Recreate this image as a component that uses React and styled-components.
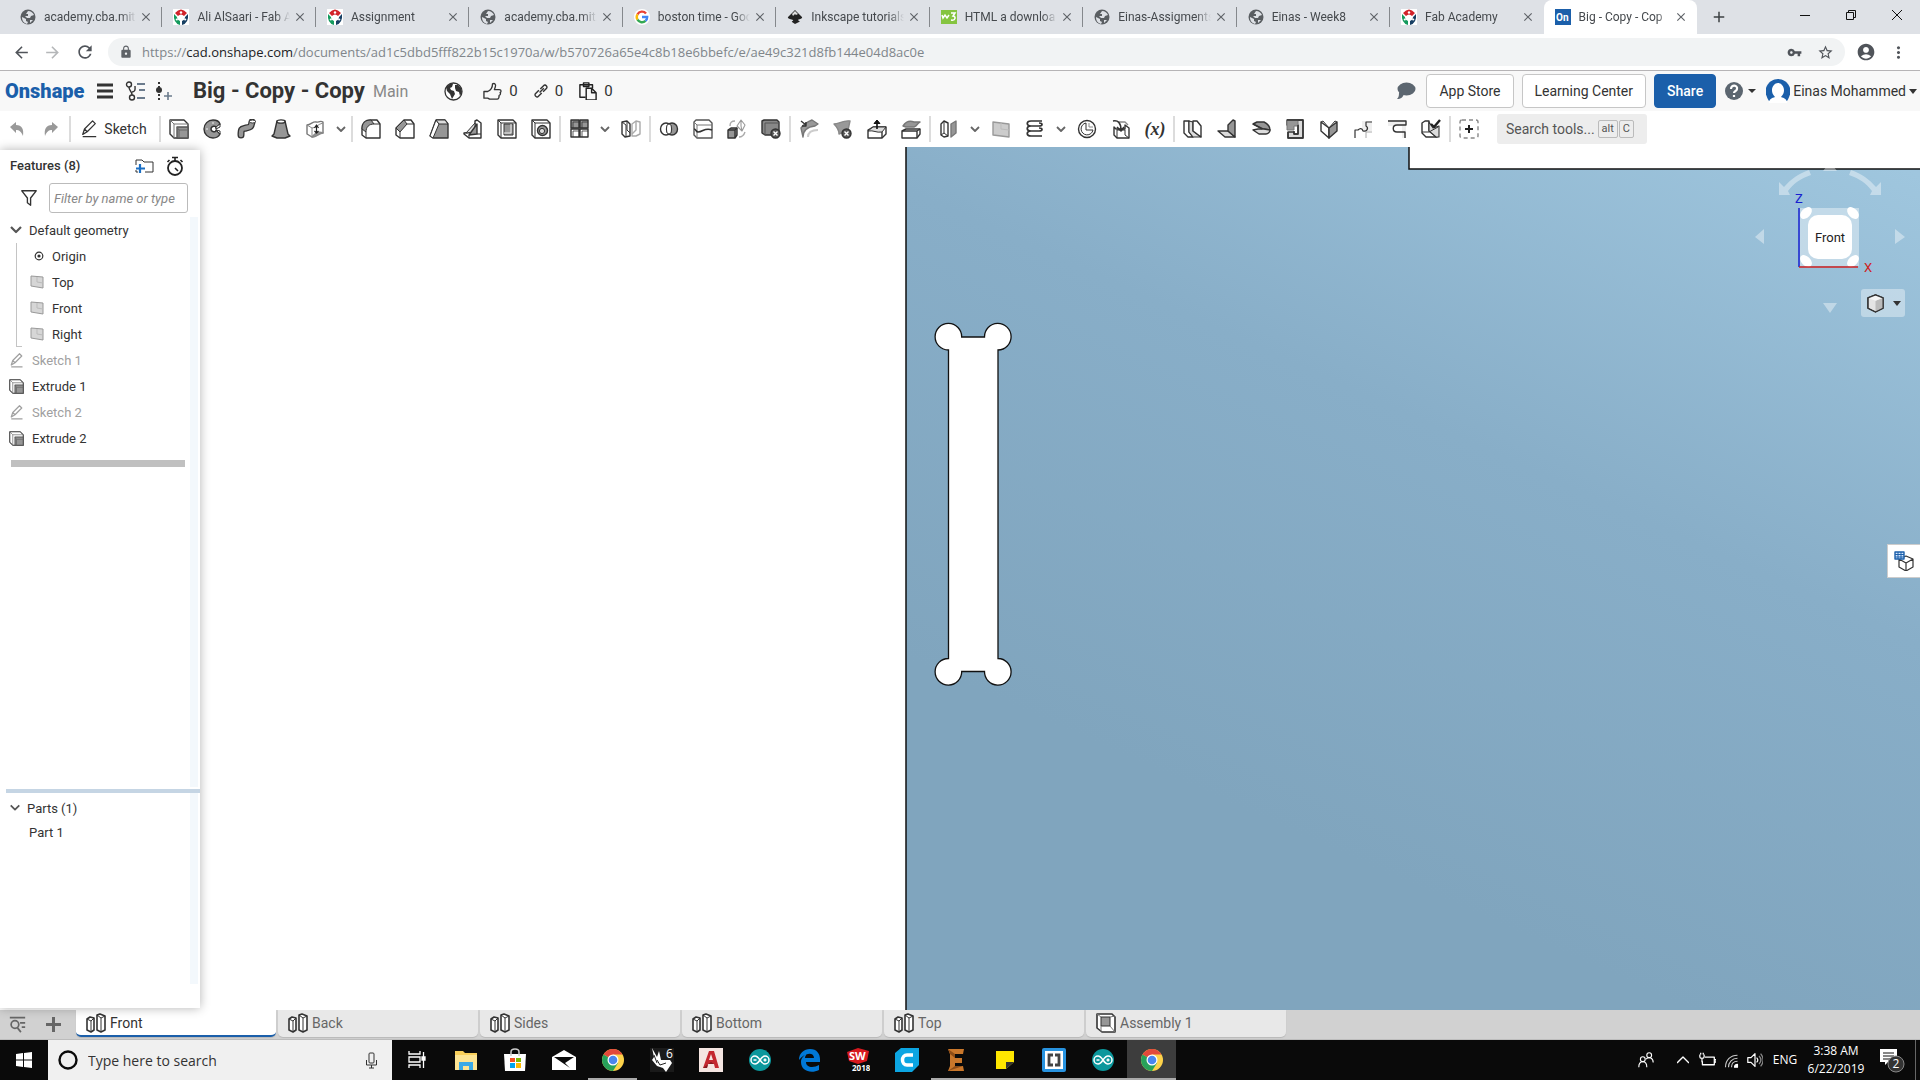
import React from "react";
import styled, { createGlobalStyle, css } from "styled-components";
import {
  MdVpnKey,
  MdStarBorder,
  MdAccountCircle,
  MdMoreVert,
  MdArrowBack,
  MdArrowForward,
  MdRefresh,
  MdLock,
  MdClose,
  MdAdd,
} from "react-icons/md";

const GlobalStyle = createGlobalStyle`
  * {
    box-sizing: border-box;
  }

  body {
    margin: 0;
    font-family: Roboto, "Liberation Sans", sans-serif;
    color: #333333;
  }

  button {
    font-family: inherit;
    color: inherit;
    background: none;
    border: 0;
    padding: 0;
  }
`;

const Page = styled.div`
  display: flex;
  flex-direction: column;
  min-height: 100vh;
  background: #ffffff;
`;

/* ---------- browser ---------- */

const TabStrip = styled.div`
  display: flex;
  height: 34px;
  padding-left: 9px;
  background: #dee1e6;
`;

const BrowserTabs = styled.div`
  display: flex;
  flex: 0 1 1688px;
  min-width: 0;
`;

const BrowserTab = styled.div`
  display: flex;
  flex: 1;
  align-items: center;
  min-width: 0;
  padding: 0 9px 0 11px;
  font-size: 12px;
  color: #45494d;
  background: linear-gradient(#85888c, #85888c) right center / 1px 20px no-repeat;

  ${(p) =>
    p.$plain &&
    css`
      background: none;
    `}

  ${(p) =>
    p.$active &&
    css`
      background: #ffffff;
      border-radius: 8px 8px 0 0;
    `}

  svg {
    flex: none;
  }
`;

const TabTitle = styled.span`
  flex: 1;
  margin: 0 3px 0 8px;
  overflow: hidden;
  white-space: nowrap;
  mask-image: linear-gradient(90deg, #000 84%, transparent);
`;

const TabClose = styled.button`
  display: flex;
  color: #5f6368;
`;

const NewTab = styled.button`
  display: grid;
  place-items: center;
  width: 44px;
  color: #3c4043;
`;

const WindowButtons = styled.div`
  display: flex;
  margin-left: auto;
`;

const WindowButton = styled.button`
  display: grid;
  place-items: center;
  width: 46px;
  height: 29px;
`;

const AddressBar = styled.div`
  display: flex;
  align-items: center;
  height: 37px;
  padding: 0 11px;
  border-bottom: 1px solid #b6b4b6;
  color: #5f6368;
`;

const NavButton = styled.button`
  display: grid;
  place-items: center;
  width: ${(p) => p.$width || 32}px;
  height: 28px;
  color: ${(p) => (p.$dim ? "#b5b7b9" : "#50545a")};
`;

const Omnibox = styled.div`
  display: flex;
  flex: 1;
  align-items: center;
  height: 28px;
  margin-left: 11px;
  padding: 0 8px 0 11px;
  border-radius: 14px;
  background: #f1f3f4;
`;

const Url = styled.div`
  flex: 1;
  margin-left: 9px;
  font-family: "Open Sans", sans-serif;
  font-size: 13px;
  color: #80868b;

  b {
    font-weight: 400;
    color: #202124;
  }
`;

/* ---------- document header ---------- */

const Header = styled.header`
  display: flex;
  align-items: center;
  height: 40px;
  padding: 0 3px 0 5px;
  background: #f8f8f8;
`;

const Brand = styled.div`
  width: 82px;
  font-size: 20px;
  font-weight: 900;
  line-height: 28px;
  color: #1b5faa;
`;

const HeaderIcon = styled.button`
  display: grid;
  place-items: center;
  width: ${(p) => p.$width || 24}px;
  height: 32px;
`;

const DocTitle = styled.h1`
  margin: 0 8px 0 14px;
  font-size: 22px;
  font-weight: 700;
  line-height: 32px;
`;

const Workspace = styled.span`
  margin-right: 36px;
  font-size: 16px;
  color: #888888;
`;

const Stats = styled.div`
  display: flex;
  align-items: center;
  gap: 16px;
  margin-left: 20px;
`;

const Stat = styled.button`
  display: flex;
  align-items: center;
  gap: 7px;
  font-size: 15px;
`;

const HeaderRight = styled.div`
  display: flex;
  align-items: center;
  gap: 8px;
  margin-left: auto;
`;

const HeaderButton = styled.button`
  height: 34px;
  padding: 0 12px;
  border: 1px solid ${(p) => (p.$primary ? "#1b5faa" : "#c6c6c6")};
  border-radius: 4px;
  background: ${(p) => (p.$primary ? "#1b5faa" : "#ffffff")};
  color: ${(p) => (p.$primary ? "#ffffff" : "#333333")};
  font-size: 14px;
  font-weight: ${(p) => (p.$primary ? 500 : 400)};
`;

const UserMenu = styled.button`
  display: flex;
  align-items: center;
  gap: 3px;
  font-size: 14px;
`;

/* ---------- toolbar ---------- */

const Toolbar = styled.div`
  display: flex;
  align-items: center;
  height: 36px;
`;

const ToolButton = styled.button`
  display: grid;
  flex: none;
  place-items: center;
  width: ${(p) => (p.$narrow ? 18 : 34)}px;
  height: 30px;
`;

const SketchButton = styled.button`
  display: flex;
  align-items: center;
  justify-content: center;
  gap: 6px;
  width: 86px;
  padding-right: 3px;
  font-size: 14px;
`;

const Divider = styled.span`
  flex: none;
  width: 2px;
  height: 26px;
  margin: 0 1px;
  background: #dcdcdc;
`;

const SearchTools = styled.button`
  display: flex;
  align-items: center;
  width: 150px;
  height: 30px;
  margin-left: 11px;
  padding: 0 9px;
  border-radius: 3px;
  background: #ededed;
  font-size: 14px;
  color: #555555;
`;

const Key = styled.kbd`
  height: 18px;
  margin-left: 1px;
  padding: 0 3px;
  border: 1px solid #bbbbbb;
  border-radius: 2px;
  font-family: inherit;
  font-size: 11px;
  line-height: 16px;

  &:first-of-type {
    margin-left: 3px;
  }
`;

/* ---------- modelling area ---------- */

const Stage = styled.main`
  position: relative;
  display: flex;
  flex: 1;
  min-height: 600px;
  padding: 3px 0 2px;
`;

const Scene = styled.svg`
  position: absolute;
  inset: 0;
  width: 100%;
  height: 100%;
`;

const ViewCube = styled.svg`
  position: absolute;
  top: 14px;
  right: 10px;
`;

const ViewMenu = styled.button`
  position: absolute;
  top: 142px;
  right: 15px;
  display: flex;
  align-items: center;
  justify-content: center;
  gap: 8px;
  width: 44px;
  height: 28px;
  border-radius: 3px;
  background: rgba(255, 255, 255, 0.38);
`;

const SideTab = styled.button`
  position: absolute;
  top: 397px;
  right: 0;
  display: grid;
  place-items: center;
  width: 33px;
  height: 34px;
  border: 1px solid #cccccc;
  border-right: 0;
  background: #ffffff;
`;

const Panel = styled.aside`
  position: relative;
  display: flex;
  flex-direction: column;
  width: 200px;
  background: #ffffff;
  box-shadow: 0 0 10px rgba(0, 0, 0, 0.3);
  font-size: 13px;
`;

const PanelHeader = styled.div`
  display: flex;
  align-items: center;
  gap: 12px;
  height: 32px;
  padding: 0 16px 0 10px;
`;

const PanelTitle = styled.h2`
  flex: 1;
  margin: 0;
  font-size: 13px;
  font-weight: 500;
  line-height: 18px;
`;

const FilterRow = styled.label`
  display: flex;
  align-items: center;
  gap: 12px;
  padding: 1px 12px 4px 21px;
`;

const FilterInput = styled.input`
  flex: 1;
  min-width: 0;
  height: 30px;
  padding: 0 4px;
  border: 1px solid #bbbbbb;
  border-radius: 3px;
  font-family: inherit;
  font-size: 13px;
  font-style: italic;

  &::placeholder {
    color: #888888;
  }
`;

const PanelSection = styled.section`
  flex: ${(p) => (p.$grow ? "1" : "0 0 191px")};
  margin-right: 2px;
  margin-bottom: ${(p) => (p.$grow ? 2 : 24)}px;
  padding-top: ${(p) => (p.$grow ? 0 : 2)}px;
  border-right: 8px solid #f3f8fc;
`;

const Splitter = styled.div`
  height: 4px;
  margin-left: 6px;
  background: #c5d5e4;
`;

const TreeRow = styled.div`
  display: flex;
  align-items: center;
  gap: ${(p) => (p.$heading ? 6 : 8)}px;
  height: ${(p) => (p.$short ? 22 : 26)}px;
  padding-left: ${(p) => p.$indent || 9}px;
  color: ${(p) => (p.$muted ? "#a0a0a0" : "#333333")};
`;

const TreeGroup = styled.div`
  margin-left: 16px;
  border-left: 1px solid #c4c4c4;
  background: linear-gradient(#c4c4c4, #c4c4c4) left bottom / 5px 1px no-repeat;
`;

const RollbackBar = styled.div`
  height: 7px;
  margin: 9px 5px 0 11px;
  background: #c0c0c0;
`;

/* ---------- document tabs ---------- */

const DocTabs = styled.nav`
  display: flex;
  gap: 2px;
  height: 30px;
  border-bottom: 1px solid #bcbcbc;
  background: #d1d1d1;
`;

const DocTabTools = styled.div`
  display: flex;
  align-items: center;
  justify-content: space-between;
  width: 74px;
  padding: 0 13px 0 9px;
`;

const DocTab = styled.button`
  display: flex;
  flex: 0 1 200px;
  align-items: center;
  gap: 4px;
  height: 27px;
  padding: 0 10px;
  border-bottom: 2px solid ${(p) => (p.$active ? "#1b5faa" : "#e8e8e8")};
  border-radius: 0 0 5px 5px;
  background: ${(p) => (p.$active ? "#ffffff" : "#e8e8e8")};
  box-shadow: 0 1px 1px #b8b8b8;
  color: ${(p) => (p.$active ? "#333333" : "#666666")};
  font-size: 14px;
`;

/* ---------- Windows taskbar ---------- */

const Taskbar = styled.footer`
  display: flex;
  height: 40px;
  background: #0a0a0a;
  color: #ffffff;
  font-family: "Open Sans", sans-serif;
`;

const TaskButton = styled.button`
  display: grid;
  place-items: center;
  width: ${(p) => p.$width || 49}px;
  background: ${(p) => (p.$active ? "#3d3d3d" : "none")};
  box-shadow: ${(p) => (p.$open ? "inset 0 -2px #aaaaaa" : "none")};
`;

const WindowsSearch = styled.div`
  display: flex;
  flex: 0 1 344px;
  align-items: center;
  gap: 10px;
  padding: 0 14px 0 10px;
  background: #f0f0f0;
  color: #333333;

  input {
    flex: 1;
    min-width: 0;
    padding: 0;
    border: 0;
    background: none;
    font-family: "Open Sans", sans-serif;
    font-size: 14px;
  }

  input::placeholder {
    color: #333333;
  }
`;

const Tray = styled.div`
  display: flex;
  align-items: center;
  margin-left: auto;
  padding-right: 4px;
`;

const TrayButton = styled.button`
  display: grid;
  place-items: center;
  width: ${(p) => p.$width || 24}px;
  height: 40px;
  font-size: 12px;
  line-height: 18px;
`;

const TrayEdge = styled.span`
  width: 1px;
  height: 40px;
  background: #666666;
`;

/* ---------- drawings ---------- */

const Icon = ({ size = 20, box = 20, children, ...rest }) => (
  <svg
    width={size}
    height={size}
    viewBox={`0 0 ${box} ${box}`}
    fill="none"
    stroke="#333"
    strokeWidth="1.4"
    strokeLinejoin="round"
    aria-hidden="true"
    {...rest}
  >
    {children}
  </svg>
);

const G = "#969696";
const L = "#dcdcdc";

const Caret = () => (
  <Icon size={10} box={10} strokeWidth="1.8" stroke="#666">
    <path d="M1 3l4 4 4-4" />
  </Icon>
);

const DownTriangle = () => (
  <svg width="8" height="5" viewBox="0 0 8 5" aria-hidden="true">
    <path d="M0 0h8L4 5z" fill="#333" />
  </svg>
);

const tools = {
  undo: <path d="M3 8l6-5v3c6 0 8 4 7 11-2-5-4-6-7-6v3z" fill="#999" stroke="none" />,
  redo: <path d="M17 8l-6-5v3C5 6 3 10 4 17c2-5 4-6 7-6v3z" fill="#999" stroke="none" />,
  sketch: <path d="M3 16l2-6 9-9 3 3-9 9-5 3zM5 10l3 3M3 18.500h15" />,
  extrude: (
    <>
      <path d="M1 1h14l4 4v14H5l-4-4z" fill="#fff" />
      <path d="M1 1l4 4v14M5 5h14" stroke="#777" strokeWidth="1" />
      <path d="M8 8h11v11H8z" fill={G} stroke="#555" />
      <path d="M8 8l2 3h9M10 11v8" stroke="#666" strokeWidth="1" />
    </>
  ),
  revolve: (
    <>
      <path
        d="M10 1C5 1 1 5 1 10s4 9 9 9c3 0 6-2 7-4l-4-4c0 3-5 2-5-1s5-4 5-1l4-4c-1-3-4-4-7-4z"
        fill={G}
      />
      <path d="M17 5v3l-4 2V8zM13 11l4 1v3z" fill="#fff" strokeWidth="1" />
      <path d="M3 10h2M10 3v2" stroke="#eee" strokeWidth="1" />
    </>
  ),
  sweep: (
    <>
      <path
        d="M4 16c0-7 1-6 5-7 5-1 5-1 6-6"
        stroke="#333"
        strokeWidth="7"
        strokeLinecap="round"
      />
      <path
        d="M4 16c0-7 1-6 5-7 5-1 5-1 6-6"
        stroke={G}
        strokeWidth="4.400"
        strokeLinecap="round"
      />
      <ellipse cx="15.500" cy="2.500" rx="3" ry="1.500" fill="#fff" strokeWidth="1" />
    </>
  ),
  loft: (
    <>
      <path d="M6 2l-3 13-2 2 5 2h8l5-2-2-2-3-13z" fill={G} />
      <ellipse cx="10" cy="2.500" rx="4" ry="1.600" fill="#fff" />
    </>
  ),
  thicken: (
    <>
      <path d="M2 6c4 0 6-4 9-3 2 1 4-2 7 0v11c-4-1-6 4-11 4l-5-3z" fill="#fff" stroke="#777" />
      <path d="M2 6l5 3v9M7 9c4 0 6-4 11-5" stroke="#888" strokeWidth="1" />
      <path d="M7 18c3-4 7-6 11-4-4 0-6 4-11 4z" fill={G} stroke="#888" />
      <path d="M11.500 14V7M9.500 9l2-3 2 3M9.500 12l2 2 2-2" stroke="#222" strokeWidth="1.200" />
    </>
  ),
  fillet: (
    <>
      <path d="M1 10c0-6 3-9 9-9h6l3 4v14H5l-4-3z" fill="#fff" />
      <path d="M1 10c0-6 3-9 9-9l3 4c-5 0-8 3-8 8z" fill={G} strokeWidth="1" />
      <path d="M5 13v6M13 5h6" strokeWidth="1" />
    </>
  ),
  chamfer: (
    <>
      <path d="M1 9l8-8h7l3 4v14H5l-4-3z" fill="#fff" />
      <path d="M1 9l8-8 3 4-7 8z" fill={G} strokeWidth="1" />
      <path d="M5 13v6M12 5h7" strokeWidth="1" />
    </>
  ),
  draft: (
    <>
      <path d="M1 17L7 1h9l3 4v14H4z" fill={G} />
      <path d="M7 1l3 4-6 14-3-2z" fill="#fff" strokeWidth="1" />
      <path d="M7 1h9l3 4h-9z" fill={L} strokeWidth="1" />
    </>
  ),
  rib: (
    <>
      <path d="M12 2l2-1 4 3v15H6l-5-4v-1l11-1z" fill="#fff" />
      <path d="M12 4v9l-9 1z" fill={L} strokeWidth="1" />
      <path d="M14 5v10l-8 1 8-11z" fill={G} />
      <path d="M14 15h4M6 16v3" strokeWidth="1" />
    </>
  ),
  shell: (
    <>
      <path d="M1 1h15l3 3v15H4l-3-3z" fill="#fff" />
      <path d="M1 1l3 3h15M4 4v15" strokeWidth="1" />
      <path d="M7 5h9v11H7z" fill={G} strokeWidth="1" />
      <path d="M7 14h7V5" stroke="#eee" strokeWidth="1" />
    </>
  ),
  hole: (
    <>
      <path d="M1 1h15l3 3v15H4l-3-3z" fill="#fff" />
      <path d="M1 1l3 3h15M4 4v15" strokeWidth="1" />
      <circle cx="11.500" cy="11.500" r="5" fill={G} />
      <circle cx="11" cy="12" r="2.600" fill={L} strokeWidth="1" />
    </>
  ),
  pattern: (
    <>
      <path d="M2 1h8v8H2zM11 1h8v8h-8z" fill={G} strokeWidth="1.400" />
      <path d="M2 10h8v8H2zM11 10h8v8h-8z" fill="#fff" strokeWidth="1.400" />
      <path d="M4 3h6M13 3h6M4 3v6M13 3v6M4 12h6M13 12h6M4 12v6M13 12v6" strokeWidth=".8" />
    </>
  ),
  mirror: (
    <>
      <path d="M1 3l5-1 3 3v12l-5 1-3-3z" fill="#fff" />
      <path d="M1 3l4 3v12M6 2v9l3 3" strokeWidth="1" />
      <path d="M19 3l-4-1-4 3v12h4l4-2z" stroke="#aaa" />
      <path d="M15 2v9l-4 4" stroke="#aaa" />
    </>
  ),
  boolean: (
    <>
      <ellipse cx="13" cy="10" rx="5.500" ry="6" fill={G} />
      <ellipse cx="7" cy="10" rx="5.500" ry="6" />
      <ellipse cx="10" cy="10" rx="2.500" ry="5" fill="#fff" strokeWidth="1" />
    </>
  ),
  split: (
    <>
      <path d="M1 3l2-2h13l3 3v15H4l-3-3z" fill="#fff" stroke="#555" />
      <path d="M1 3l3 3h15M4 6v13" stroke="#777" strokeWidth="1" />
      <path d="M1 10c2 0 2 3 4 3 5 0 7-5 14-2" strokeWidth="1.600" />
    </>
  ),
  transform: (
    <>
      <path d="M1 11l3-2h6v7l-2 3H1z" fill={G} />
      <path d="M1 11h7v8M8 11l2-2" />
      <path d="M14 1l4 5-3 6-5-5zM14 1v6l1 5" stroke="#999" strokeWidth="1.100" />
      <path d="M3 7c0-4 2-5 5-5M18 13c-1 3-3 5-6 5" stroke="#aaa" />
    </>
  ),
  deletePart: (
    <>
      <path d="M1 2l2-1h13l2 2v13H4l-3-2z" fill="#888" />
      <path d="M4 4h14M4 4v12" stroke="#555" strokeWidth="1" />
      <circle cx="14.500" cy="14.500" r="4.500" fill="#555" stroke="#333" />
      <path d="M12.500 12.500l4 4M16.500 12.500l-4 4" stroke="#fff" />
    </>
  ),
  modifyFillet: (
    <>
      <path d="M4 18c0-6 3-10 12-11l3-2-6-4C8 3 4 6 2 9z" fill="#999" stroke="#777" />
      <path d="M9 18c0-4 3-7 10-7" stroke="#ccc" strokeWidth="2" />
      <path d="M2 2l5 4M7 3v4H3" stroke="#333" />
    </>
  ),
  deleteFace: (
    <>
      <path d="M1 5c5 0 9-4 16-3l-2 9-9 4C6 11 4 8 1 5z" fill="#999" stroke="#888" />
      <circle cx="13.500" cy="14.500" r="4.500" fill="#555" stroke="#333" />
      <path d="M11.500 12.500l4 4M15.500 12.500l-4 4" stroke="#fff" />
    </>
  ),
  moveFace: (
    <>
      <path d="M1 11l5-3h13v7l-4 4H1z" fill="#fff" />
      <path d="M1 12c6-1 8 2 14 1l4-5H6z" fill={L} strokeWidth="1" />
      <path d="M15 13v6" />
      <path d="M10 10V3" stroke="#111" strokeWidth="1.600" />
      <path d="M7 4.500L10 1l3 3.500z" fill="#111" stroke="#111" strokeWidth="1" />
    </>
  ),
  replaceFace: (
    <>
      <path d="M1 12l4-2h14v5l-3 4H1z" fill="#fff" />
      <path d="M1 12h15l3-2M16 12v7" />
      <path d="M2 7c2-3 6-6 11-4h6c-3 1-2 4-6 5H5z" fill={G} stroke="#777" />
    </>
  ),
  surface: (
    <>
      <path d="M2 5l3-3 4 2v13l-4 1-3-2z" fill="#fff" />
      <path d="M5 2v12l-3 2M5 14l4 3" strokeWidth="1" />
      <path d="M12 5l5-3v12l-5 4z" fill={G} stroke="#777" />
    </>
  ),
  plane: (
    <>
      <path d="M2 3l16 2v13l-16-2z" fill="#ccc" stroke="#999" />
      <path d="M10 4v6l8 1" stroke="#bbb" strokeWidth="1" />
    </>
  ),
  helix: (
    <path
      d="M17 2H6C1 2 1 7 6 7h8c4 0 4-3 0-3M6 7c-5 0-5 5 0 5h8c4 0 4-3 0-3M6 12c-5 0-5 5 0 5h11"
      strokeWidth="1.700"
    />
  ),
  curve: (
    <>
      <circle cx="10" cy="10" r="8.500" />
      <path d="M9 4a6 6 0 1 0 7 7H9z" strokeWidth="1" />
      <path d="M12 4v4h4" stroke="#888" strokeWidth="1" />
    </>
  ),
  derived: (
    <>
      <path d="M3 8l2 2h9V6l4 3v10H6l-3-3z" fill="#fff" />
      <path d="M6 19V11h8v5l4 3" strokeWidth="1" />
      <path d="M7 3h7l3 3" stroke="#888" />
      <path d="M2 2c5-1 8 2 8 9M6 8l4 4 3-4" strokeWidth="1.600" />
    </>
  ),
  sheetMetal: (
    <>
      <path d="M1 2h5v11l4 5H5l-4-4z" fill="#fff" />
      <path d="M6 2l4 1v9l8 6h-8l-4-5z" fill={L} strokeWidth="1.100" />
      <path d="M10 2h4l4 5v11l-8-6z" fill="#fff" />
    </>
  ),
  flange: (
    <>
      <path d="M1 12h10l7 6H8z" fill={L} />
      <path d="M11 12V6l5-5 2 1v16z" fill={G} />
    </>
  ),
  hem: (
    <>
      <path d="M2 5l4-2h7c4 2 6 5 6 8l-7-1z" fill={G} />
      <path d="M2 11l5-1h6l6 1c0 2-2 4-4 4H8z" fill={L} />
      <path d="M2 5l9 5" />
    </>
  ),
  tab: (
    <>
      <path d="M2 1h16v18H3v-6h6v2h4V6H2z" fill={L} />
      <path d="M2 1h11v6H9v4H2z" fill={G} stroke="#777" strokeWidth="1" />
      <path d="M13 6v9H9v-3M3 13v6h15V1H2" />
    </>
  ),
  joint: (
    <>
      <path d="M2 3l8 6v10l-8-7z" fill="#fff" />
      <path d="M10 9l8-6v9l-8 7z" fill={G} />
      <path d="M2 3l2-1 6 7 6-7 2 1" strokeWidth="1" />
    </>
  ),
  corner: (
    <>
      <path d="M9 2h10v10H9z" fill="#eee" stroke="none" />
      <path d="M19 3h-6v4c3 2 1 6-3 5-1-3-3-3-5-1H2v8" strokeWidth="1.200" />
      <path d="M13 13v6M13 13h6" stroke="#aaa" strokeWidth="1" />
    </>
  ),
  relief: (
    <>
      <path d="M1 1h18v18h-4V7H1z" fill="#eee" stroke="none" />
      <path d="M1 2h18v4h-9c-5 0-5 7 0 7h8v6" />
    </>
  ),
  finish: (
    <>
      <path d="M1 4l3-2h4v10l8 6H5l-4-4z" fill="#fff" />
      <path d="M8 3l4 6 6-2v11h-3l-7-6z" fill={L} strokeWidth="1.100" />
      <path d="M1 13h7l9-5" strokeWidth="1" />
      <path d="M10 5l3 3 6-7" stroke="#222" strokeWidth="2.400" />
    </>
  ),
  addTool: (
    <>
      <rect x="1" y="1" width="18" height="18" rx="2" stroke="#888" strokeDasharray="4 3" />
      <path d="M10 6v8M6 10h8" stroke="#222" strokeWidth="2" />
    </>
  ),
};

const Tool = ({ name, label }) => (
  <ToolButton aria-label={label || name}>
    <Icon>{tools[name]}</Icon>
  </ToolButton>
);

const MoreTools = () => (
  <ToolButton $narrow aria-label="more">
    <Caret />
  </ToolButton>
);

const VariableTool = styled(ToolButton)`
  font-family: "Liberation Serif", serif;
  font-size: 18px;
  font-style: italic;
  font-weight: 700;
`;

const GlobeFav = () => (
  <svg width="16" height="16" viewBox="0 0 16 16" aria-hidden="true">
    <circle cx="8" cy="8" r="7.500" fill="#5a5e62" />
    <path
      d="M8 2c3 0 5 2 6 4l-3 1-1 2H7L5 7h3V5H6zM2 8l4 2v2l2 1-1 2C4 14 2 12 2 8zM10 11l3 0-3 3z"
      fill="#dee1e6"
    />
  </svg>
);

const FabFav = () => (
  <svg width="16" height="16" viewBox="0 0 16 16" aria-hidden="true">
    <rect width="16" height="16" fill="#fff" />
    <path d="M2 4q6-7 12 0l-3 3q-3-3-6 0z" fill="#d2232a" />
    <path d="M1 5l3 3c0 2 1 3 3 4v4q-7-2-6-11z" fill="#149a5d" />
    <path d="M15 5l-3 3c0 2-1 3-3 4v4q7-2 6-11z" fill="#173f63" />
    <circle cx="8" cy="3.500" r="1.200" fill="#fff" />
    <circle cx="3.800" cy="10.500" r="1.100" fill="#fff" />
    <circle cx="12.200" cy="10.500" r="1.100" fill="#fff" />
  </svg>
);

const GoogleFav = () => (
  <svg width="16" height="16" viewBox="0 0 16 16" fill="none" strokeWidth="2.400" aria-hidden="true">
    <circle cx="8" cy="8" r="8" fill="#fff" />
    <path d="M12 4.500A5.200 5.200 0 0 0 3.500 5.300" stroke="#ea4335" />
    <path d="M3.500 5.300a5.200 5.200 0 0 0 0 5.400" stroke="#fbbc05" />
    <path d="M3.500 10.700a5.200 5.200 0 0 0 8 1.200" stroke="#34a853" />
    <path d="M11.500 11.900A5.200 5.200 0 0 0 13.200 8H8" stroke="#4285f4" />
  </svg>
);

const InkscapeFav = () => (
  <svg width="16" height="16" viewBox="0 0 16 16" aria-hidden="true">
    <path d="M8 1l7 7c1 2-4 2-4 3s3 1 1 2l-4 2-3-2c-1-1 2-1 1-2S0 10 1 8z" fill="#222" />
    <path d="M8 2l3 3-2 1-1-1-2 2-1-2z" fill="#ddd" />
  </svg>
);

const W3Fav = () => (
  <svg width="16" height="16" viewBox="0 0 16 16" aria-hidden="true">
    <rect width="16" height="14" y="1" fill="#85c440" />
    <path
      d="M1 6l1 3 2-3 2 3 2-3M10 4h4l-2 3c3 0 3 5-2 4"
      fill="none"
      stroke="#fff"
      strokeWidth="1.500"
    />
  </svg>
);

const OnshapeFav = () => (
  <svg width="16" height="16" viewBox="0 0 16 16" aria-hidden="true">
    <rect width="16" height="16" fill="#1b5faa" />
    <text x="1" y="12" fill="#fff" fontSize="10" fontWeight="700">
      On
    </text>
  </svg>
);

const Earth = () => (
  <svg width="19" height="19" viewBox="0 0 19 19" aria-hidden="true">
    <circle cx="9.500" cy="9.500" r="8.500" fill="#fff" stroke="#333" strokeWidth="1.300" />
    <path
      d="M2 5l4-3 3 0-1 3-2 1 1 2 3 1 1 3-3 5-2-5-3-3zM11 3l3 0 3 3 1 4-2 4-1-4-3-1-1-3z"
      fill="#333"
    />
  </svg>
);

const browserTabs = [
  { title: "academy.cba.mit.", Fav: GlobeFav },
  { title: "Ali AlSaari - Fab A", Fav: FabFav },
  { title: "Assignment", Fav: FabFav },
  { title: "academy.cba.mit.", Fav: GlobeFav },
  { title: "boston time - Goo", Fav: GoogleFav },
  { title: "Inkscape tutorials", Fav: InkscapeFav },
  { title: "HTML a downloa", Fav: W3Fav },
  { title: "Einas-Assigments", Fav: GlobeFav },
  { title: "Einas - Week8", Fav: GlobeFav },
  { title: "Fab Academy", Fav: FabFav, plain: true },
  { title: "Big - Copy - Cop", Fav: OnshapeFav, active: true },
];

const Browser = () => (
  <>
    <TabStrip>
      <BrowserTabs>
        {browserTabs.map(({ title, Fav, active, plain }, i) => (
          <BrowserTab key={i} $active={active} $plain={plain}>
            <Fav />
            <TabTitle>{title}</TabTitle>
            <TabClose aria-label="Close tab">
              <MdClose size={14} />
            </TabClose>
          </BrowserTab>
        ))}
      </BrowserTabs>
      <NewTab aria-label="New tab">
        <MdAdd size={18} />
      </NewTab>
      <WindowButtons>
        <WindowButton aria-label="Minimise">
          <Icon size={10} box={10} stroke="#111" strokeWidth="1">
            <path d="M0 5.500h10" />
          </Icon>
        </WindowButton>
        <WindowButton aria-label="Restore">
          <Icon size={10} box={10} stroke="#111" strokeWidth="1">
            <path d="M.5 2.500h7v7h-7zM2.500 2.500v-2h7v7h-2" />
          </Icon>
        </WindowButton>
        <WindowButton aria-label="Close">
          <Icon size={10} box={10} stroke="#111" strokeWidth="1">
            <path d="M0 0l10 10M10 0L0 10" />
          </Icon>
        </WindowButton>
      </WindowButtons>
    </TabStrip>
    <AddressBar>
      <NavButton $width={20} aria-label="Back">
        <MdArrowBack size={19} />
      </NavButton>
      <NavButton $width={42} $dim aria-label="Forward">
        <MdArrowForward size={19} />
      </NavButton>
      <NavButton $width={24} aria-label="Reload">
        <MdRefresh size={20} />
      </NavButton>
      <Omnibox>
        <MdLock size={14} />
        <Url>
          https://<b>cad.onshape.com</b>
          /documents/ad1c5dbd5fff822b15c1970a/w/b570726a65e4c8b18e6bbefc/e/ae49c321d8fb144e04d8ac0e
        </Url>
        <NavButton $width={38} aria-label="Passwords">
          <MdVpnKey size={15} />
        </NavButton>
        <NavButton $width={24} aria-label="Bookmark">
          <MdStarBorder size={17} />
        </NavButton>
      </Omnibox>
      <NavButton $width={42} aria-label="Profile">
        <MdAccountCircle size={20} />
      </NavButton>
      <NavButton $width={22} aria-label="Menu">
        <MdMoreVert size={19} />
      </NavButton>
    </AddressBar>
  </>
);

const DocHeader = () => (
  <Header>
    <Brand>Onshape</Brand>
    <HeaderIcon $width={36} aria-label="Menu">
      <Icon size={18} box={18} strokeWidth="3" strokeLinejoin="miter">
        <path d="M1 3h16M1 9h16M1 15h16" />
      </Icon>
    </HeaderIcon>
    <HeaderIcon aria-label="Versions and history">
      <Icon>
        <circle cx="4" cy="3.500" r="2.500" />
        <circle cx="7" cy="16.500" r="2.500" />
        <path d="M4 6c0 4 3 4 3 8M7 11c4 0 3-4 3-6" />
        <path d="M12 3h8M14 9h6M12 17h8" stroke="#6b7b8c" strokeWidth="2" />
      </Icon>
    </HeaderIcon>
    <HeaderIcon $width={32} aria-label="Insert">
      <Icon>
        <path d="M6 1v18" strokeDasharray="2 2" strokeWidth="2" />
        <circle cx="6" cy="9" r="3" fill="#333" stroke="none" />
        <path d="M15 11v8M11 15h8" stroke="#6b7b8c" strokeWidth="1.600" />
      </Icon>
    </HeaderIcon>
    <DocTitle>Big - Copy - Copy</DocTitle>
    <Workspace>Main</Workspace>
    <Earth />
    <Stats>
      <Stat aria-label="Likes">
        <Icon size={19}>
          <path d="M1 10h4c2-1 5-4 5-8 2-1 4 0 3 3l-1 3h5c3 0 2 3 1 3 1 1 0 3-1 3 0 2 0 4-2 4H7l-2-1H1z" />
        </Icon>
        0
      </Stat>
      <Stat aria-label="Links">
        <Icon size={14}>
          <path
            d="M8 12l6-6M9 7l5-5c2-2 6 2 4 4l-5 5M11 13l-5 5c-2 2-6-2-4-4l5-5"
            strokeWidth="2"
          />
        </Icon>
        0
      </Stat>
      <Stat aria-label="Copies">
        <Icon size={18}>
          <path
            d="M7 17H1V3h14v4M5 1h6v4H5zM8 7h6l5 5v8H8zM14 7v5h5"
            stroke="#222"
            strokeWidth="1.600"
          />
        </Icon>
        0
      </Stat>
    </Stats>
    <HeaderRight>
      <HeaderIcon aria-label="Comments">
        <svg width="20" height="18" viewBox="0 0 20 18">
          <ellipse cx="10.500" cy="7" rx="9" ry="6.500" fill="#5c6670" />
          <path d="M3 10c0 3 0 5-2 7 4 0 6-2 7-5z" fill="#5c6670" />
        </svg>
      </HeaderIcon>
      <HeaderButton>App Store</HeaderButton>
      <HeaderButton>Learning Center</HeaderButton>
      <HeaderButton $primary>Share</HeaderButton>
      <HeaderIcon $width={34} aria-label="Help">
        <svg width="32" height="18" viewBox="0 0 32 18">
          <circle cx="9" cy="9" r="9" fill="#5c6670" />
          <path
            d="M6 7c0-5 7-4 6 0 0 2-3 2-3 4M9 13v2"
            fill="none"
            stroke="#fff"
            strokeWidth="2.200"
          />
          <path d="M23 7h8l-4 4z" fill="#333" />
        </svg>
      </HeaderIcon>
      <UserMenu>
        <svg width="24" height="24" viewBox="0 0 24 24" aria-hidden="true">
          <path d="M3 22C-6 8 5 0 12 0s18 8 9 22z" fill="#1b5faa" />
          <path d="M3 24c0-4 3-5 6-6-6-6-2-14 3-14s9 8 3 14c3 1 6 2 6 6z" fill="#fff" />
        </svg>
        Einas Mohammed
        <DownTriangle />
      </UserMenu>
    </HeaderRight>
  </Header>
);

const FeatureToolbar = () => (
  <Toolbar>
    <Tool name="undo" />
    <Tool name="redo" />
    <Divider />
    <SketchButton>
      <Icon size={18}>{tools.sketch}</Icon>
      Sketch
    </SketchButton>
    <Divider />
    {["extrude", "revolve", "sweep", "loft", "thicken"].map((name) => (
      <Tool key={name} name={name} />
    ))}
    <MoreTools />
    <Divider />
    {["fillet", "chamfer", "draft", "rib", "shell", "hole"].map((name) => (
      <Tool key={name} name={name} />
    ))}
    <Divider />
    <Tool name="pattern" />
    <MoreTools />
    <Tool name="mirror" />
    <Divider />
    {["boolean", "split", "transform", "deletePart"].map((name) => (
      <Tool key={name} name={name} />
    ))}
    <Divider />
    {["modifyFillet", "deleteFace", "moveFace", "replaceFace"].map((name) => (
      <Tool key={name} name={name} />
    ))}
    <Divider />
    <Tool name="surface" />
    <MoreTools />
    <Tool name="plane" />
    <Tool name="helix" />
    <MoreTools />
    <Tool name="curve" />
    <Tool name="derived" />
    <VariableTool aria-label="Variable">(x)</VariableTool>
    <Divider />
    {["sheetMetal", "flange", "hem", "tab", "joint", "corner", "relief", "finish"].map((name) => (
      <Tool key={name} name={name} />
    ))}
    <Divider />
    <Tool name="addTool" label="Add custom features" />
    <SearchTools>
      Search tools...
      <Key>alt</Key>
      <Key>C</Key>
    </SearchTools>
  </Toolbar>
);

const PlaneIcon = () => (
  <svg width="14" height="14" viewBox="0 0 14 14" aria-hidden="true">
    <path d="M1 1l12 1v11l-12-2z" fill="#d6d6d6" stroke="#999" />
    <path d="M7 2v5l6 1" fill="none" stroke="#bbb" />
  </svg>
);

const FeaturePanel = () => (
  <Panel>
    <PanelHeader>
      <PanelTitle>Features (8)</PanelTitle>
      <svg width="19" height="16" viewBox="0 0 19 16" fill="none" aria-hidden="true">
        <path d="M1 7V2h6l2 2h9v10h-8M1 12v2h2" stroke="#333" />
        <path d="M5 6v9M1 10.500h9" stroke="#1b6fc4" strokeWidth="2.200" />
      </svg>
      <svg width="18" height="20" viewBox="0 0 18 20" fill="none" stroke="#222" aria-hidden="true">
        <circle cx="9" cy="12" r="7" strokeWidth="1.800" />
        <path d="M6 1.500h6M9 1v4M14.500 4l2 2M3.500 4l-2 2M9 12l3 3" strokeWidth="1.600" />
      </svg>
    </PanelHeader>
    <FilterRow>
      <Icon size={16} strokeWidth="1.700">
        <path d="M1 1h18l-7 9v9l-4-3v-6z" />
      </Icon>
      <FilterInput placeholder="Filter by name or type" aria-label="Filter features" />
    </FilterRow>
    <PanelSection $grow>
      <TreeRow $heading>
        <Icon size={14} box={14} stroke="#555" strokeWidth="2.200">
          <path d="M2 4l5 5 5-5" />
        </Icon>
        Default geometry
      </TreeRow>
      <TreeGroup>
        <TreeRow $indent={13}>
          <Icon size={14} box={14} strokeWidth="1.200">
            <circle cx="9" cy="7" r="3.800" />
            <circle cx="9" cy="7" r="1.600" fill="#333" stroke="none" />
          </Icon>
          Origin
        </TreeRow>
        {["Top", "Front", "Right"].map((name) => (
          <TreeRow key={name} $indent={13}>
            <PlaneIcon />
            {name}
          </TreeRow>
        ))}
      </TreeGroup>
      {[1, 2].map((n) => (
        <React.Fragment key={n}>
          <TreeRow $muted>
            <Icon size={15} stroke="#a0a0a0" strokeWidth="1.600">
              {tools.sketch}
            </Icon>
            Sketch {n}
          </TreeRow>
          <TreeRow>
            <Icon size={15}>{tools.extrude}</Icon>
            Extrude {n}
          </TreeRow>
        </React.Fragment>
      ))}
      <RollbackBar />
    </PanelSection>
    <Splitter />
    <PanelSection>
      <TreeRow $heading>
        <Icon size={12} box={14} stroke="#555" strokeWidth="2">
          <path d="M2 4l5 5 5-5" />
        </Icon>
        Parts (1)
      </TreeRow>
      <TreeRow $short $indent={29}>
        Part 1
      </TreeRow>
    </PanelSection>
  </Panel>
);

const Model = () => (
  <Scene viewBox="0 0 1920 863" preserveAspectRatio="xMidYMid slice">
    <defs>
      <linearGradient id="face" gradientUnits="userSpaceOnUse" x1="1900" y1="20" x2="1550" y2="800">
        <stop offset="0" stopColor="#9fc6de" />
        <stop offset="0.5" stopColor="#88aec8" />
        <stop offset="1" stopColor="#80a5be" />
      </linearGradient>
    </defs>
    <path d="M906 -10H1930V880H906z" fill="url(#face)" stroke="#111" strokeWidth="1.500" />
    <path d="M1409 -10V22H1930V-10z" fill="#fff" stroke="#111" strokeWidth="1.500" />
    <path
      d="M948.500 203A13.300 13.300 0 1 1 961.700 190H984.500A13.300 13.300 0 1 1 998 203V511.500A13.300 13.300 0 1 1 984.500 524.500H961.700A13.300 13.300 0 1 1 948.500 511.500z"
      fill="#fff"
      stroke="#111"
      strokeWidth="1.300"
    />
  </Scene>
);

const Orientation = () => (
  <ViewCube width="156" height="156" viewBox="0 0 156 156">
    <g fill="#fff" fillOpacity="0.4">
      <path d="M76 1l7 9H69zM76 152l7-10H69zM1 76l9-8v15zM151 76l-10-8v15z" />
      <path d="M55 9c-11 4-18 9-25 17l-5-5v13h11l-2-4c6-8 12-12 23-16z" />
      <path d="M97 9c11 4 18 9 25 17l5-5v13h-11l2-4c-6-8-12-12-23-16z" />
      <path d="M46 47h59v58H46z" />
    </g>
    <g fill="#fff">
      <ellipse cx="52" cy="52" rx="7" ry="4.500" transform="rotate(-45 52 52)" />
      <ellipse cx="99" cy="52" rx="7" ry="4.500" transform="rotate(45 99 52)" />
      <ellipse cx="52" cy="100" rx="7" ry="4.500" transform="rotate(45 52 100)" />
      <ellipse cx="99" cy="100" rx="7" ry="4.500" transform="rotate(-45 99 100)" />
      <rect x="54" y="54" width="44" height="44" rx="10" />
    </g>
    <path d="M45 47v59" stroke="#1720d0" strokeWidth="1.500" />
    <path d="M45 106h59" stroke="#d02020" strokeWidth="1.500" />
    <text x="76" y="81" fontSize="13" textAnchor="middle" fill="#222">
      Front
    </text>
    <text x="45" y="42" fontSize="13" textAnchor="middle" fill="#1720d0">
      Z
    </text>
    <text x="114" y="111" fontSize="13" textAnchor="middle" fill="#d02020">
      X
    </text>
  </ViewCube>
);

const PartStudioIcon = () => (
  <Icon strokeWidth="1.600">
    <path d="M1 6l3-2 4 1v12l-3 2-4-2z" fill="#fff" />
    <path d="M11 2l3-1 5 2v14l-4 2-4-2z" fill="#fff" />
    <path d="M1 6l4 2v11M5 8l3-3M11 2l4 3v14M15 5l4-2" strokeWidth="1" />
  </Icon>
);

const AssemblyIcon = () => (
  <Icon strokeWidth="1.600">
    <path d="M1 1h15l3 3v15H6l-5-4z" fill="#fff" />
    <path d="M5 4h9v9H5z" fill={G} strokeWidth="1" />
    <path d="M1 1l4 3M14 4l5-1M5 13v6M14 13l5 6" stroke="#777" strokeWidth="1" />
  </Icon>
);

const docTabs = ["Front", "Back", "Sides", "Bottom", "Top", "Assembly 1"];

const DocumentTabs = () => (
  <DocTabs>
    <DocTabTools>
      <Icon size={17} stroke="#666" strokeWidth="2">
        <path d="M1 2h18M13 8h6M15 13h4" />
        <circle cx="7" cy="10" r="4.500" />
        <path d="M10 14l4 5" />
      </Icon>
      <Icon size={15} box={15} stroke="#666" strokeWidth="3">
        <path d="M7.500 0v15M0 7.500h15" />
      </Icon>
    </DocTabTools>
    {docTabs.map((name, i) => (
      <DocTab key={name} $active={i === 0}>
        {name === "Assembly 1" ? <AssemblyIcon /> : <PartStudioIcon />}
        {name}
      </DocTab>
    ))}
  </DocTabs>
);

const Chrome = () => (
  <svg width="24" height="24" viewBox="0 0 24 24" aria-hidden="true">
    <circle cx="12" cy="12" r="11" fill="#fdd24a" />
    <path d="M12 12L2.500 6.500A11 11 0 0 1 21.500 6.500H12z" fill="#e2493b" />
    <path d="M2.500 6.500A11 11 0 0 0 12 23l5-8-5-3z" fill="#27a15a" />
    <circle cx="12" cy="12" r="5.500" fill="#fff" />
    <circle cx="12" cy="12" r="4.300" fill="#4a86ee" />
  </svg>
);

const Arduino = () => (
  <svg width="24" height="24" viewBox="0 0 24 24" aria-hidden="true">
    <circle cx="12" cy="12" r="11" fill="#0b979c" />
    <path
      d="M12 12c-2-3-3-4-5-4a4 4 0 0 0 0 8c2 0 3-1 5-4s3-4 5-4a4 4 0 0 1 0 8c-2 0-3-1-5-4zM5.500 12h3M15.500 12h3M17 10.500v3"
      fill="none"
      stroke="#fff"
      strokeWidth="1.500"
    />
  </svg>
);

const apps = [
  {
    name: "Task View",
    art: (
      <g fill="none" stroke="#fff" strokeWidth="1.300">
        <path d="M4 3v3h11V3M4 20v-3h11v3M4 9h11v5H4zM18.500 4v16" />
        <path d="M17 9h3v3h-3z" fill="#fff" />
      </g>
    ),
  },
  {
    name: "File Explorer",
    art: (
      <>
        <path d="M1 3h8l2 2h12v17H1z" fill="#f9cf5a" />
        <path d="M1 7h22v15H1z" fill="#fde493" />
        <path d="M5 22v-8h14v8h-4v-4H9v4z" fill="#3aa9e6" />
      </>
    ),
  },
  {
    name: "Store",
    art: (
      <>
        <path d="M1 6h22l-1 17H2z" fill="#fff" />
        <path d="M8 8V4c0-4 8-4 8 0v4" fill="none" stroke="#ccc" strokeWidth="1.500" />
        <path d="M7 10h5v4H7z" fill="#f25022" />
        <path d="M13 10h5v4h-5z" fill="#7fba00" />
        <path d="M7 15h5v5H7z" fill="#00a4ef" />
        <path d="M13 15h5v5h-5z" fill="#ffb900" />
      </>
    ),
  },
  {
    name: "Mail",
    art: (
      <>
        <path d="M0 9l12-7 12 7v13H0z" fill="#fff" />
        <path d="M2 9h20l-9 6 5 5z" fill="#0a0a0a" />
      </>
    ),
  },
  { name: "Chrome", open: true, art: <Chrome /> },
  {
    name: "Rhino",
    art: (
      <>
        <path d="M0 0h24v24H0z" fill="#1a1a1a" />
        <path d="M2 0l5 9 2-6 2 9 9 0 2 3-6 9-3-4-6-2-5-6 2-3z" fill="#fff" />
        <path d="M7 12l3 5 6-2M4 7l3 8" stroke="#222" fill="none" />
        <text x="16" y="10" fill="#fff" fontSize="12">
          6
        </text>
      </>
    ),
  },
  {
    name: "AutoCAD",
    art: (
      <>
        <path d="M0 0h24v24H0z" fill="#f5e6e2" />
        <path d="M4 20l6-17h5l5 17h-4l-1-4H9l-1 4zM10 12h4l-2-6z" fill="#c42830" fillRule="evenodd" />
        <path d="M4 20l8-6 3 2H9l-1 4z" fill="#861a20" />
      </>
    ),
  },
  { name: "Arduino", art: <Arduino /> },
  {
    name: "Edge",
    art: (
      <path
        d="M2 12C2 5 7 1 13 1c7 0 10 5 10 10v3H9c0 6 8 6 13 3v5c-8 4-18 1-18-8 0-4 3-7 6-8-1 1-2 2-2 4h9c0-6-9-6-15 2z"
        fill="#0078d7"
      />
    ),
  },
  {
    name: "SolidWorks",
    art: (
      <>
        <path d="M1 4l11-4 11 3-2 10-9 3-9-3z" fill="#d7191f" />
        <text x="3" y="12" fill="#fff" fontSize="11" fontWeight="700">
          SW
        </text>
        <text x="6" y="23" fill="#fff" fontSize="8" fontWeight="700">
          2018
        </text>
      </>
    ),
  },
  {
    name: "Cura",
    art: (
      <>
        <path d="M6 0h18v17l-7 7H0V5z" fill="#0ca5e2" />
        <path d="M18 7h-6c-6 0-6 10 0 10h6" fill="none" stroke="#fff" strokeWidth="3.500" />
      </>
    ),
  },
  {
    name: "Eagle",
    open: true,
    art: (
      <>
        <path d="M4 1h16l-1 5h-8v4h7v5h-7v3h8l1 5H4l2-5V6z" fill="#c9772b" />
        <path d="M4 1l7 5v4L6 6zM4 23l7-5h8z" fill="#8d4d17" />
      </>
    ),
  },
  {
    name: "Sticky Notes",
    open: true,
    art: (
      <>
        <path d="M3 3h18v11l-8 7H3z" fill="#ffe600" />
        <path d="M13 21v-7h8z" fill="#333" />
      </>
    ),
  },
  {
    name: "Brackets",
    open: true,
    art: (
      <>
        <rect width="24" height="24" rx="2" fill="#2893df" />
        <path d="M3 3h18v18H3z" fill="#fff" />
        <path d="M11 7H7v10h4M13 7h4v10h-4" fill="none" stroke="#444" strokeWidth="2.800" />
      </>
    ),
  },
  { name: "Arduino sketch", open: true, art: <Arduino /> },
  { name: "Chrome window", open: true, active: true, art: <Chrome /> },
];

const WindowsTaskbar = () => (
  <Taskbar>
    <TaskButton $width={48} aria-label="Start">
      <svg width="16" height="16" viewBox="0 0 16 16" fill="#fff">
        <path d="M0 2l7-1v6.500H0zM8 1l8-1v7.500H8zM0 8.500h7V15l-7-1zM8 8.500h8V16l-8-1z" />
      </svg>
    </TaskButton>
    <WindowsSearch>
      <svg width="20" height="20" viewBox="0 0 20 20" aria-hidden="true">
        <circle cx="10" cy="10" r="8.500" fill="none" stroke="#0a0a0a" strokeWidth="2.400" />
      </svg>
      <input placeholder="Type here to search" aria-label="Search Windows" />
      <svg width="13" height="17" viewBox="0 0 13 17" fill="none" stroke="#333" aria-hidden="true">
        <rect x="4" y="1" width="5" height="10" rx="1" />
        <path d="M1.500 8v5h10V8M6.500 13v3M4 16h5" />
      </svg>
    </WindowsSearch>
    {apps.map(({ name, art, open, active }) => (
      <TaskButton key={name} $open={open} $active={active} aria-label={name}>
        <svg width="24" height="24" viewBox="0 0 24 24">
          {art}
        </svg>
      </TaskButton>
    ))}
    <Tray>
      <TrayButton $width={50} aria-label="People">
        <Icon size={16} stroke="#fff">
          <circle cx="14" cy="4" r="3" />
          <circle cx="6" cy="9" r="3" />
          <path d="M1 19c0-9 10-9 10 0M10 9c4-4 9-1 9 4" />
        </Icon>
      </TrayButton>
      <TrayButton aria-label="Hidden icons">
        <Icon size={12} box={12} stroke="#fff">
          <path d="M0 9l6-6 6 6" />
        </Icon>
      </TrayButton>
      <TrayButton aria-label="Battery">
        <Icon size={17} stroke="#fff" strokeWidth="1.500">
          <path d="M7 6h11v9H4v-4M18 9h2v3h-2M1 3v3c0 2 5 2 5 0V3M2 1v2M5 1v2M3.500 7v5" />
        </Icon>
      </TrayButton>
      <TrayButton aria-label="Network">
        <Icon size={15} stroke="#fff" strokeWidth="1.500">
          <path d="M2 19C2 9 9 3 18 3M6 19c0-7 5-12 12-12M10 19c0-5 3-8 8-8" stroke="#ccc" />
          <path d="M14 19c0-3 1-4 4-4v4z" fill="#fff" />
        </Icon>
      </TrayButton>
      <TrayButton aria-label="Volume">
        <Icon size={16} stroke="#fff" strokeWidth="1.500">
          <path d="M1 7h4l5-5v16l-5-5H1zM12 7c2 2 2 4 0 6" />
          <path d="M15 5c3 3 3 7 0 10M17 2c4 5 4 11 0 16" stroke="#888" />
        </Icon>
      </TrayButton>
      <TrayButton $width={36}>ENG</TrayButton>
      <TrayButton $width={66}>
        <span>
          3:38 AM
          <br />
          6/22/2019
        </span>
      </TrayButton>
      <TrayButton $width={46} aria-label="Notifications">
        <svg width="26" height="26" viewBox="0 0 26 26">
          <path d="M1 2h17v13H9l-3 3v-3H1z" fill="#fff" />
          <path d="M4 6h11M4 9h11M4 12h8" stroke="#111" />
          <circle cx="17" cy="17" r="8" fill="#333" stroke="#888" />
          <text x="17" y="21" fontSize="12" fill="#fff" textAnchor="middle">
            2
          </text>
        </svg>
      </TrayButton>
      <TrayEdge />
    </Tray>
  </Taskbar>
);

export default function App() {
  return (
    <Page>
      <GlobalStyle />
      <Browser />
      <DocHeader />
      <FeatureToolbar />
      <Stage>
        <Model />
        <FeaturePanel />
        <Orientation />
        <ViewMenu aria-label="View options">
          <Icon size={19} strokeWidth="1.300">
            <path d="M10 1l8 3v11l-8 4-8-4V4z" fill="#e4e4e4" />
            <path d="M10 7v12l8-4V4z" fill="#bbb" stroke="none" />
            <path d="M2 4l8 3 8-3-8-3z" fill="#f5f5f5" stroke="none" />
            <path d="M10 1l8 3v11l-8 4-8-4V4z" />
          </Icon>
          <DownTriangle />
        </ViewMenu>
        <SideTab aria-label="Configurations">
          <Icon>
            <path d="M12 5l7 3v8l-7 4-7-4V8zM5 8l7 4 7-4M12 12v8" strokeWidth="1.200" />
            <path d="M1 1h9v7H1z" fill="#d6e8ff" stroke="#1b5faa" />
            <path d="M4 1v7M7 1v7M1 3.500h9M1 6h9" stroke="#1b5faa" strokeWidth="1" />
          </Icon>
        </SideTab>
      </Stage>
      <DocumentTabs />
      <WindowsTaskbar />
    </Page>
  );
}
